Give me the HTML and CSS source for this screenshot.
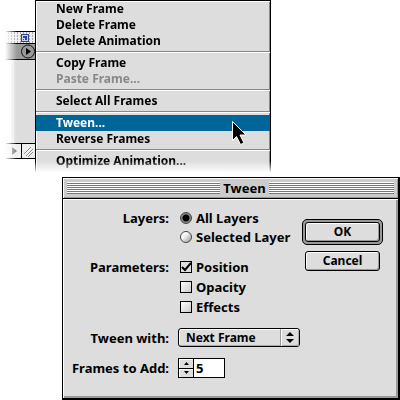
FILE: index.html
```
<!DOCTYPE html>
<html lang="en">

<head>
  <meta charset="utf-8">
  <title>Tween</title>
  <link rel="stylesheet" href="styles.css">
</head>

<body>
  <div class="palette">
    <div class="palette-bar">
      <svg width="8" height="8" viewBox="0 0 8 8" shape-rendering="crispEdges">
        <rect width="8" height="8" fill="#33429a" />
        <rect x="1" y="1" width="6" height="6" fill="#c8cef0" />
        <path d="M2 2h4v4H4V4H2z" fill="#33429a" />
        <rect x="2" y="5" width="1" height="1" fill="#33429a" />
      </svg>
    </div>
    <div class="palette-tab">
      <button type="button" class="arrow" aria-label="Options">
        <svg width="15" height="15" viewBox="0 0 15 15">
          <circle cx="8" cy="7.500" r="6.500" fill="#999" stroke="#111" />
          <path d="M6 4v7l5-3.500z" fill="#000" />
        </svg>
      </button>
    </div>
    <div class="palette-body"></div>
    <div class="palette-foot">
      <svg width="30" height="14" viewBox="0 0 30 14">
        <path d="M7 3v8l5-4z" fill="#777" />
        <path d="M16.500 0v14" stroke="#000" />
        <path d="M19 10l7-7M21 12l7-7M23 13l5-5" stroke="#888" />
        <path d="M20 10l7-7M22 12l6-6" stroke="#fff" />
      </svg>
    </div>
  </div>

  <div class="menu">
    <button type="button">New Frame</button>
    <button type="button">Delete Frame</button>
    <button type="button">Delete Animation</button>
    <hr>
    <button type="button">Copy Frame</button>
    <button type="button" disabled>Paste Frame...</button>
    <hr>
    <button type="button">Select All Frames</button>
    <hr>
    <button type="button" class="active">Tween...</button>
    <button type="button">Reverse Frames</button>
    <hr>
    <button type="button">Optimize Animation...</button>
  </div>

  <svg class="cursor" width="17" height="26" viewBox="0 0 17 26">
    <path d="M1.500 1.500v19l4-4 4 8 3.500-1.500-4-8h6z" fill="#000" stroke="#fff" />
  </svg>

  <form class="dialog">
    <div class="titlebar">
      <span class="stripes wide"></span>
      <h1>Tween</h1>
      <span class="stripes"></span>
    </div>
    <div class="content">
      <div class="fields">
        <div class="row top" role="radiogroup" aria-labelledby="layers">
          <span class="name" id="layers">Layers:</span>
          <div class="options radios">
            <label><input type="radio" name="layers" checked>All Layers</label>
            <label><input type="radio" name="layers">Selected Layer</label>
          </div>
        </div>
        <div class="row top" role="group" aria-labelledby="params">
          <span class="name" id="params">Parameters:</span>
          <div class="options">
            <label><input type="checkbox" checked>Position</label>
            <label><input type="checkbox">Opacity</label>
            <label><input type="checkbox">Effects</label>
          </div>
        </div>
        <div class="row">
          <label class="name" for="with">Tween with:</label>
          <div class="popup">
            <select id="with">
              <option>Next Frame</option>
            </select>
            <svg width="19" height="17" viewBox="0 0 19 17">
              <path d="M.5 0v17" stroke="#999" />
              <path d="M1.500 17V.5H18" stroke="#fff" fill="none" />
              <path d="M18.500 1v15.500H2" stroke="#aaa" fill="none" />
              <path d="M6 7l4-4 4 4zM6 10h8l-4 4z" fill="#000" />
            </svg>
          </div>
        </div>
        <div class="row">
          <label class="name" for="count">Frames to Add:</label>
          <div class="stepper">
            <div class="steps">
              <button type="button" aria-label="More">
                <svg width="5" height="3" viewBox="0 0 5 3"><path d="M0 3l2.500-3L5 3z" /></svg>
              </button>
              <button type="button" aria-label="Fewer">
                <svg width="5" height="3" viewBox="0 0 5 3"><path d="M0 0h5L2.500 3z" /></svg>
              </button>
            </div>
            <input type="text" id="count" value="5">
          </div>
        </div>
      </div>
      <div class="buttons">
        <div class="default"><button type="button">OK</button></div>
        <button type="button">Cancel</button>
      </div>
    </div>
  </form>
</body>

</html>
```
FILE: styles.css
```
body {
  margin: 0;
  background: #fff;
}

body,
button,
input,
select {
  color: #000;
  font-family: "Noto Sans", sans-serif;
  font-size: 12px;
  font-weight: bold;
  line-height: 16px;
}

button,
input,
select {
  box-sizing: border-box;
  margin: 0;
  padding: 0;
  border-radius: 0;
  appearance: none;
}

svg {
  display: block;
}

/* palette behind the menu */
.palette {
  position: absolute;
  left: 5px;
  top: 31px;
  width: 30px;
  -webkit-mask-image: linear-gradient(to right, transparent, #000 12px);
  mask-image: linear-gradient(to right, transparent, #000 12px);
}

.palette-bar {
  display: flex;
  align-items: center;
  justify-content: flex-end;
  height: 11px;
  padding-right: 6px;
  border-top: 1px solid #000;
  border-bottom: 1px solid #000;
  background: conic-gradient(#eee 75%, #aaa 0) 0 0 / 3px 3px;
}

.palette-tab {
  display: flex;
  justify-content: flex-end;
  height: 15px;
  border-bottom: 1px solid #000;
  background: #999;
}

.arrow {
  border: 0;
  background: none;
}

.palette-body {
  height: 83px;
  margin-left: 6px;
  border-left: 3px solid #eee;
  background: #ddd;
}

.palette-foot {
  border-top: 1px solid #000;
  border-bottom: 1px solid #000;
  background: #eee;
}

/* menu */
.menu {
  position: absolute;
  left: 35px;
  top: 0;
  width: 234px;
  padding-bottom: 4px;
  border: 1px solid #000;
  border-bottom: 0;
  background: #ddd;
  box-shadow: inset 1px 1px #fff, inset -1px 0 #888;
  -webkit-mask-image: linear-gradient(to top, transparent, #000 12px);
  mask-image: linear-gradient(to top, transparent, #000 12px);
}

.menu button {
  display: block;
  width: 100%;
  height: 16px;
  padding-left: 20px;
  border: 0;
  background: none;
  text-align: left;
}

.menu button:disabled {
  color: #888;
}

.menu .active {
  background: #069;
  color: #fff;
}

.menu hr {
  height: 1px;
  margin: 2px 0;
  border: 0;
  border-top: 1px solid #888;
  background: #fff;
}

.cursor {
  position: absolute;
  left: 231px;
  top: 120px;
}

/* dialog */
.dialog {
  position: absolute;
  left: 62px;
  right: 0;
  top: 177px;
  border: 1px solid #000;
  border-right-width: 2px;
  border-bottom-width: 2px;
  background: #ddd;
  font-size: 13px;
}

.titlebar {
  display: flex;
  align-items: center;
  gap: 3px;
  height: 20px;
  padding: 0 4px;
  border-bottom: 1px solid #000;
  background: #ccc;
  box-shadow: inset 1px 1px #fff, inset -1px -1px #999;
}

.stripes {
  flex: 9;
  height: 12px;
  background: repeating-linear-gradient(#fff 0 1px, #777 1px 2px);
}

.wide {
  flex: 11;
}

h1 {
  margin: 0;
  font-size: 13px;
}

.content {
  display: flex;
  justify-content: space-between;
  padding: 9px 15px 20px 0;
  box-shadow: inset 1px 1px #fff, inset -2px -2px #999;
}

.fields {
  display: grid;
  gap: 11px;
}

.row {
  display: grid;
  grid-template-columns: 106px auto;
  column-gap: 9px;
  align-items: center;
}

.top {
  align-items: start;
}

.name {
  text-align: right;
}

.top .name {
  line-height: 20px;
}

.options {
  display: grid;
  padding-left: 2px;
}

.options label {
  display: flex;
  align-items: center;
  gap: 4px;
  height: 20px;
}

.radios label {
  height: 19px;
}

input[type="radio"],
input[type="checkbox"] {
  width: 12px;
  height: 12px;
  border: 1px solid #000;
  background: linear-gradient(135deg, #fff, #ccc);
}

input[type="radio"] {
  border-color: #444;
  border-radius: 50%;
  background: linear-gradient(135deg, #fff 30%, #999);
}

input[type="radio"]:checked {
  background: radial-gradient(circle, #000 3px, #888 4px);
}

input[type="checkbox"]:checked {
  background: url("data:image/svg+xml,%3Csvg xmlns='http://www.w3.org/2000/svg' viewBox='0 0 10 10'%3E%3Cpath d='M1 5l3 3 6-7' fill='none' stroke='%23000' stroke-width='2'/%3E%3C/svg%3E") #ddd;
}

.popup {
  display: flex;
  position: relative;
  width: 122px;
}

.popup select {
  width: 100%;
  height: 19px;
  padding: 0 20px 0 7px;
  border: 1px solid #000;
  border-radius: 3px;
  background: #ddd;
  box-shadow: inset 1px 1px #fff, inset -1px -1px #aaa;
}

.popup svg {
  position: absolute;
  right: 1px;
  top: 1px;
  pointer-events: none;
}

.stepper {
  display: flex;
  height: 20px;
}

.steps {
  display: grid;
  width: 14px;
  border: 1px solid #000;
  border-right: 0;
}

.steps button {
  display: flex;
  align-items: center;
  justify-content: center;
  border: 0;
  background: #ddd;
  box-shadow: inset 1px 1px #fff;
}

.steps button + button {
  border-top: 1px solid #000;
}

.stepper input {
  width: 32px;
  padding: 0 2px;
  border: 1px solid #000;
  background: #fff;
  font-size: 13px;
}

.buttons {
  display: flex;
  flex-direction: column;
  align-items: center;
  gap: 6px;
  padding-top: 11px;
}

.buttons button {
  display: block;
  width: 75px;
  height: 20px;
  border: 1px solid #000;
  border-radius: 3px;
  background: #ddd;
  box-shadow: inset 1px 1px #fff, inset -1px -1px #999;
}

.default {
  padding: 2px;
  border: 1px solid #000;
  border-radius: 5px;
  background: #999;
}
```
